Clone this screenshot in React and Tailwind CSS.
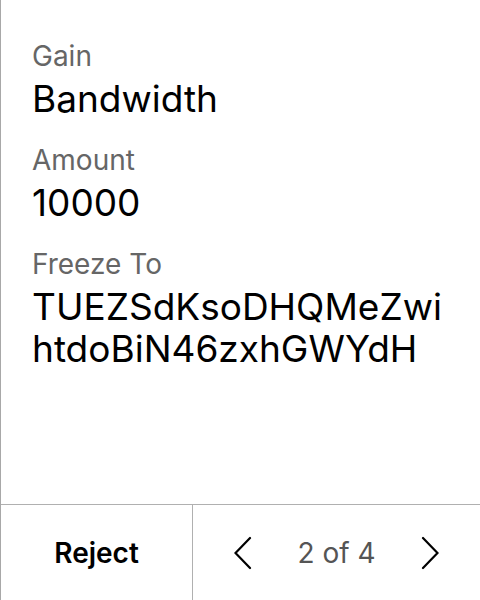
export default function App() {
  const font = { fontFamily: "Inter, 'Noto Sans', sans-serif" };
  return (
    <div className="w-[480px] h-[600px] bg-white border-l border-[#a8a8a8] flex flex-col text-black" style={font}>
      <div className="flex-1 pt-[40px] pl-[31px] pr-[32px] flex flex-col gap-[24px]">
        <div className="flex flex-col">
          <div className="text-[28px] leading-[32px] text-[#666666]">Gain</div>
          <div className="mt-[6px] text-[37px] leading-[42px]">Bandwidth</div>
        </div>
        <div className="flex flex-col">
          <div className="text-[28px] leading-[32px] text-[#666666]">Amount</div>
          <div className="mt-[6px] text-[37px] leading-[42px]">10000</div>
        </div>
        <div className="flex flex-col">
          <div className="text-[28px] leading-[32px] text-[#666666]">Freeze To</div>
          <div className="mt-[6px] text-[37px] leading-[42px] break-all">TUEZSdKsoDHQMeZwihtdoBiN46zxhGWYdH</div>
        </div>
      </div>
      <div className="h-[96px] border-t border-[#b0b0b0] flex">
        <div className="w-[192px] border-r border-[#b0b0b0] flex items-center justify-center">
          <span className="text-[28px] font-semibold">Reject</span>
        </div>
        <div className="flex-1 flex items-center justify-center gap-[45px]">
          <svg width="18" height="34" viewBox="0 0 18 34" fill="none" stroke="black" strokeWidth="2.2" strokeLinecap="round" strokeLinejoin="miter">
            <polyline points="16,2 1.5,17 16,32" />
          </svg>
          <span className="text-[28px] text-[#555555]">2 of 4</span>
          <svg width="18" height="34" viewBox="0 0 18 34" fill="none" stroke="black" strokeWidth="2.2" strokeLinecap="round" strokeLinejoin="miter">
            <polyline points="2,2 16.5,17 2,32" />
          </svg>
        </div>
      </div>
    </div>
  );
}
